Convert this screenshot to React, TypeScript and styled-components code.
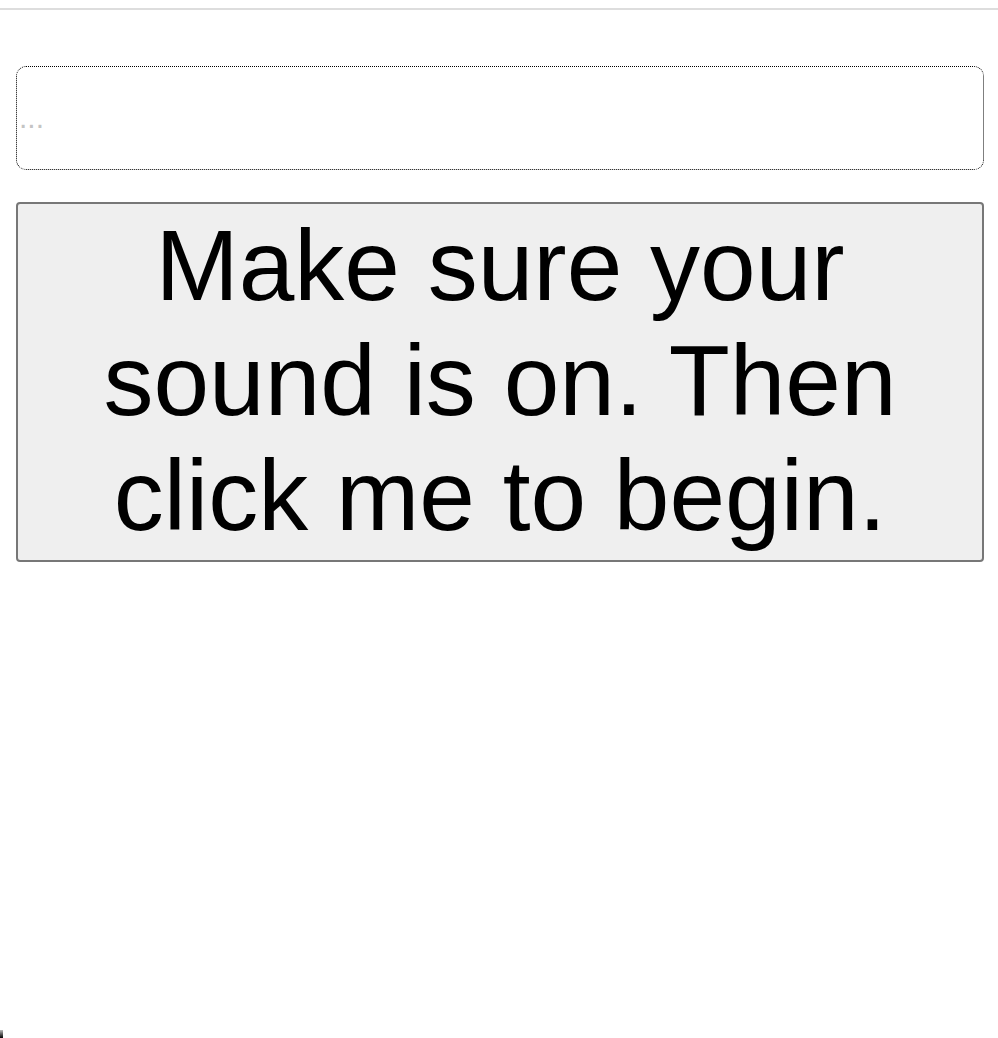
import React from "react";
import styled, { createGlobalStyle } from "styled-components";

const GlobalStyle = createGlobalStyle`
  html, body {
    margin: 0;
    padding: 0;
    background: #ffffff;
    font-family: "Liberation Sans", Arial, sans-serif;
  }
  body {
    overflow: hidden;
  }
`;

const Page = styled.div`
  display: flex;
  flex-direction: column;
  width: 998px;
  height: 1038px;
  padding-top: 8px;
  box-sizing: border-box;
`;

const TopRule = styled.div`
  height: 2px;
  width: 100%;
  background: #dddddd;
`;

const Main = styled.main`
  display: flex;
  flex-direction: column;
  gap: 32px;
  padding: 56px 14px 0 16px;
`;

const Answer = styled.input`
  box-sizing: border-box;
  width: 100%;
  height: 104px;
  margin: 0;
  padding: 0 2px;
  border: 1px dotted #000000;
  border-radius: 10px;
  font-family: "Liberation Sans", Arial, sans-serif;
  font-size: 30px;
  color: #000;
  background: #fff;
  outline: none;

  &::placeholder {
    color: #c4c4c4;
  }
`;

const StartButton = styled.button`
  box-sizing: border-box;
  width: 100%;
  height: 360px;
  margin: 0;
  padding: 0 6px 4px;
  border: 2px solid #777777;
  border-radius: 4px;
  background: #efefef;
  color: #000000;
  font-family: "Liberation Sans", Arial, sans-serif;
  font-size: 100px;
  line-height: 1.15;
  text-align: center;
  cursor: pointer;
`;

const CornerMark = styled.div`
  margin-top: 468px;
  width: 3px;
  height: 8px;
  background: linear-gradient(#bbbbbb, #000000);
`;

export default function App() {
  return (
    <>
      <GlobalStyle />
      <Page>
        <TopRule />
        <Main>
          <Answer placeholder="..." />
          <StartButton>Make sure your sound is on. Then click me to begin.</StartButton>
        </Main>
        <CornerMark />
      </Page>
    </>
  );
}
